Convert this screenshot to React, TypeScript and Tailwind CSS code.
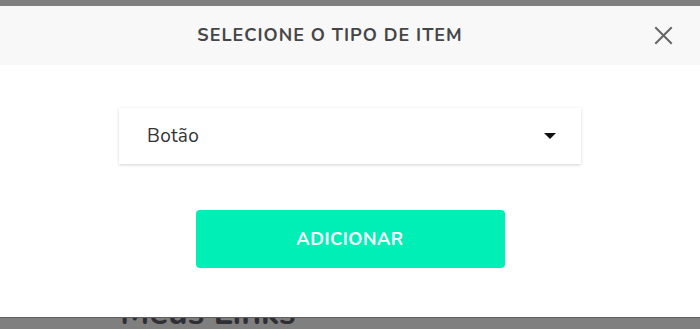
export default function App() {
  return (
    <div className="relative h-[329px] w-[700px] overflow-hidden bg-[#7f7f7f] font-['Nunito','Open_Sans',sans-serif]">
      {/* page behind the overlay */}
      <div className="absolute left-[120px] top-[296px] text-[34px] font-bold leading-none text-[#2e2e34]">
        Meus Links
      </div>

      <div className="relative mt-[6px] flex h-[311px] flex-col bg-white shadow-[0_1px_0_#5f5f5f]">
        <div className="flex h-[59px] items-center bg-[#f8f8f8] px-6">
          <h2 className="flex-1 pr-[18px] text-center text-[18px] font-bold tracking-[1px] text-[#464646]">
            SELECIONE O TIPO DE ITEM
          </h2>
          <button className="mr-[3px] text-[#666]">
            <svg width="19" height="19" viewBox="0 0 19 19" stroke="currentColor" strokeWidth="2" strokeLinecap="square">
              <path d="M2 2L17 17M17 2L2 17" />
            </svg>
          </button>
        </div>

        <div className="flex flex-col items-center pt-[43px]">
          <div className="flex h-[56px] w-[462px] items-center justify-between bg-white pl-[28px] pr-[25px] shadow-[0_1px_3px_rgba(0,0,0,0.18)]">
            <span className="text-[19px] tracking-[0.3px] text-[#333]">Botão</span>
            <svg width="12" height="6" viewBox="0 0 12 6">
              <path d="M0 0H12L6 6Z" fill="#111" />
            </svg>
          </div>

          <button className="mt-[46px] h-[58px] w-[309px] rounded-[4px] bg-[#00efb6] text-[18px] font-bold tracking-[0.5px] text-white">
            ADICIONAR
          </button>
        </div>
      </div>
    </div>
  )
}
